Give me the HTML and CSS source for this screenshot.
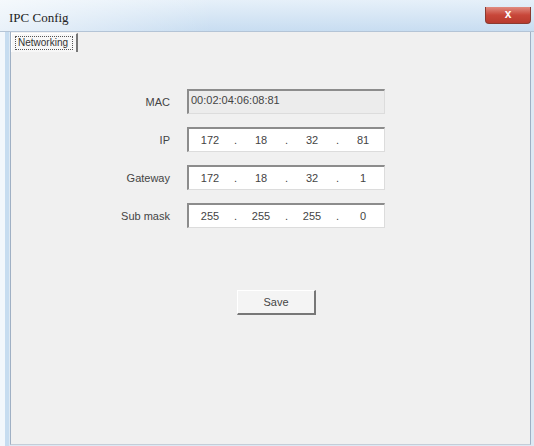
FILE: index.html
```html
<!DOCTYPE html>
<html lang="en">
<head>
    <meta charset="UTF-8">
    <meta name="viewport" content="width=device-width, initial-scale=1.0">
    <title>IPC Config</title>
    <link rel="stylesheet" href="styles.css">
</head>
<body>
    <div class="window">
        <div class="titlebar">
            <span class="title">IPC Config</span>
            <span class="close">x</span>
        </div>
        <div class="frame">
            <div class="panel">
                <div class="tabs">
                    <span class="tab"><span class="tab-label">Networking</span></span>
                </div>

                <div class="form">
                    <label class="label">MAC</label>
                    <div class="field field-disabled">00:02:04:06:08:81</div>

                    <label class="label">IP</label>
                    <div class="field ip">
                        <span class="seg">172</span><span class="dot">.</span>
                        <span class="seg">18</span><span class="dot">.</span>
                        <span class="seg">32</span><span class="dot">.</span>
                        <span class="seg">81</span>
                    </div>

                    <label class="label">Gateway</label>
                    <div class="field ip">
                        <span class="seg">172</span><span class="dot">.</span>
                        <span class="seg">18</span><span class="dot">.</span>
                        <span class="seg">32</span><span class="dot">.</span>
                        <span class="seg">1</span>
                    </div>

                    <label class="label">Sub mask</label>
                    <div class="field ip">
                        <span class="seg">255</span><span class="dot">.</span>
                        <span class="seg">255</span><span class="dot">.</span>
                        <span class="seg">255</span><span class="dot">.</span>
                        <span class="seg">0</span>
                    </div>
                </div>

                <div class="actions">
                    <button class="save">Save</button>
                </div>
            </div>
        </div>
    </div>
</body>
</html>
```

FILE: styles.css
```css
* {
    box-sizing: border-box;
}

body {
    margin: 0;
    font-family: "Liberation Sans", Arial, sans-serif;
    font-size: 11px;
    color: #444;
    background: #dde9f4;
}

.window {
    width: 534px;
    height: 446px;
    display: flex;
    flex-direction: column;
}

/* Title bar */
.titlebar {
    height: 32px;
    display: flex;
    justify-content: space-between;
    align-items: flex-start;
    background: linear-gradient(to right, rgba(255, 255, 255, 0.6), rgba(255, 255, 255, 0) 40%),
                linear-gradient(to bottom, #e6f0f9, #c8ddf1);
    border-bottom: 1px solid #b4c4d6;
}

.title {
    font-family: "Liberation Serif", "Times New Roman", serif;
    font-size: 13px;
    color: #222;
    padding: 10px 0 0 9px;
}

.close {
    width: 46px;
    height: 17px;
    margin: 7px 3px 0 0;
    border: 1px solid #8a3a30;
    border-top: none;
    border-radius: 0 0 4px 4px;
    background: linear-gradient(to bottom, #e08b80, #c8473a 50%, #b83a2e);
    color: #fff;
    font-weight: bold;
    font-size: 12px;
    line-height: 14px;
    text-align: center;
}

/* Frame round the panel */
.frame {
    flex: 1;
    padding: 0 3px 1px 10px;
    background: linear-gradient(to right, #f2f7fc 0, #f2f7fc 5px, #c6dcf0 5px, #c6dcf0 9px, #dde9f4 9px);
}

.panel {
    height: 100%;
    background: #f0f0f0;
    border-left: 1px solid #9fb0c4;
    border-right: 1px solid #9fb0c4;
    border-bottom: 1px solid #c4cdd8;
}

/* Tab strip */
.tabs {
    height: 19px;
    display: flex;
}

.tab {
    width: 67px;
    height: 19px;
    margin-top: 1px;
    padding: 2px 3px;
    background: #f7f7f7;
    border-top: 1px solid #fff;
    border-left: 1px solid #fff;
    border-right: 2px solid #777;
}

.tab-label {
    display: block;
    font-size: 10px;
    line-height: 12px;
    padding: 0 2px;
    color: #333;
    border: 1px dotted #555;
}

/* Form */
.form {
    margin: 38px 0 0 89px;
    display: grid;
    grid-template-columns: 70px 198px;
    grid-auto-rows: 25px;
    column-gap: 17px;
    row-gap: 13px;
}

.label {
    text-align: right;
    align-self: center;
    padding-top: 1px;
}

.field {
    background: #fff;
    border-top: 2px solid #8c8c8c;
    border-left: 2px solid #8c8c8c;
    border-right: 1px solid #dcdcdc;
    border-bottom: 1px solid #dcdcdc;
}

.field-disabled {
    background: #ececec;
    padding: 3px 0 0 2px;
}

.ip {
    display: flex;
    align-items: center;
    padding-left: 3px;
}

.seg {
    width: 36px;
    text-align: center;
}

.dot {
    width: 15px;
    text-align: center;
}

/* Save button */
.actions {
    margin: 62px 0 0 226px;
}

.save {
    width: 79px;
    height: 25px;
    font-family: "Liberation Sans", Arial, sans-serif;
    font-size: 11px;
    color: #444;
    background: #f4f4f4;
    border-top: 1px solid #fff;
    border-left: 1px solid #fff;
    border-right: 2px solid #777;
    border-bottom: 2px solid #777;
    padding: 0;
}
```
